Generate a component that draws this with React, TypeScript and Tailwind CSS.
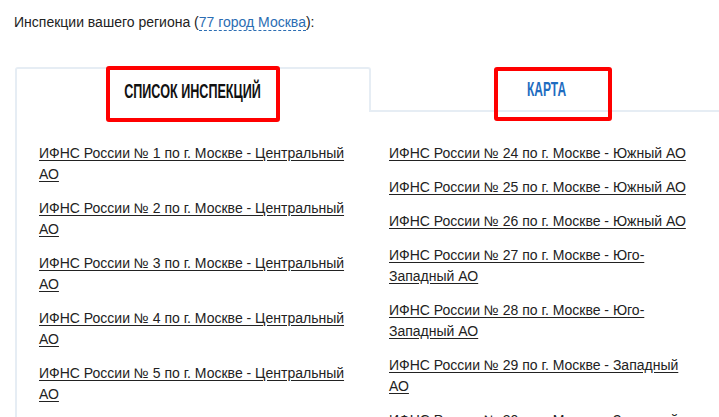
import React from "react";

const leftItems = [
  "ИФНС России № 1 по г. Москве - Центральный АО",
  "ИФНС России № 2 по г. Москве - Центральный АО",
  "ИФНС России № 3 по г. Москве - Центральный АО",
  "ИФНС России № 4 по г. Москве - Центральный АО",
  "ИФНС России № 5 по г. Москве - Центральный АО",
  "ИФНС России № 7 по г. Москве - Центральный АО",
];

const rightItems = [
  "ИФНС России № 24 по г. Москве - Южный АО",
  "ИФНС России № 25 по г. Москве - Южный АО",
  "ИФНС России № 26 по г. Москве - Южный АО",
  "ИФНС России № 27 по г. Москве - Юго-Западный АО",
  "ИФНС России № 28 по г. Москве - Юго-Западный АО",
  "ИФНС России № 29 по г. Москве - Западный АО",
  "ИФНС России № 30 по г. Москве - Западный АО",
];

const InspectionList = ({ items, className }: { items: string[]; className: string }) => (
  <ul className={`flex flex-col gap-[13px] ${className}`}>
    {items.map((item) => (
      <li key={item}>
        <a href="#" className="text-[#222] underline underline-offset-2 leading-[21px]">
          {item}
        </a>
      </li>
    ))}
  </ul>
);

export default function App() {
  return (
    <div className="w-full h-[417px] overflow-hidden bg-white font-['Liberation_Sans',Arial,sans-serif]">
      <p className="pl-[14px] pt-[13px] text-[14px] leading-[19px] text-[#222]">
        Инспекции вашего региона (
        <a href="#" className="text-[#2b6db3] border-b border-dashed border-[#2b6db3]">
          77 город Москва
        </a>
        ):
      </p>

      <div className="ml-[15px] mt-[35px] w-[708px]">
        <div className="flex h-[45px]">
          <div className="relative flex-1 flex items-center justify-center border-2 border-b-0 border-[#e6edf4] rounded-t-[3px] bg-white">
            <span className="inline-block scale-x-[0.63] text-[20px] font-bold text-[#111] whitespace-nowrap">
              СПИСОК ИНСПЕКЦИЙ
            </span>
            <div className="absolute left-[89px] top-[-3px] w-[174px] h-[56px] border-4 border-[#ff0000] rounded-[3px]" />
          </div>
          <div className="relative flex-1 flex items-center justify-center border-b-2 border-[#e6edf4]">
            <span className="inline-block scale-x-[0.6] text-[20px] font-bold text-[#1e6cc0] whitespace-nowrap">
              КАРТА
            </span>
            <div className="absolute left-[123px] top-0 w-[118px] h-[54px] border-4 border-[#ff0000] rounded-[3px]" />
          </div>
        </div>

        <div className="border-l-2 border-[#e6edf4] pl-[22px] pt-[31px] grid grid-cols-[350px_1fr] text-[14px]">
          <InspectionList items={leftItems} className="pr-[40px]" />
          <InspectionList items={rightItems} className="pr-[30px]" />
        </div>
      </div>
    </div>
  );
}
